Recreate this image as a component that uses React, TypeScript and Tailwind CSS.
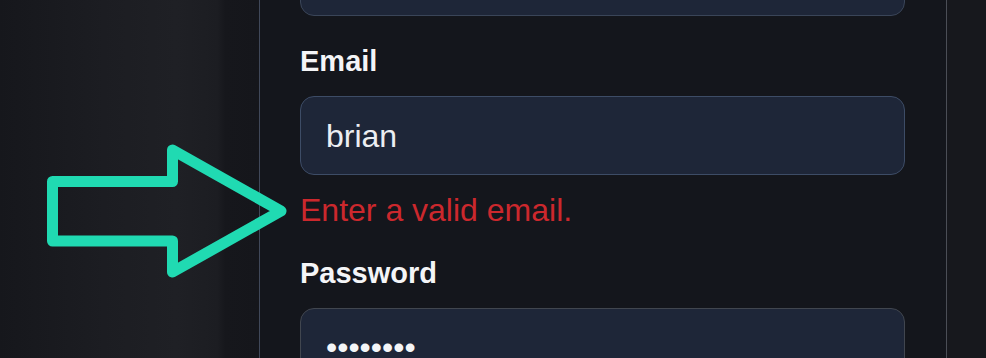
export default function App() {
  return (
    <div className="relative flex h-[358px] w-[986px] overflow-hidden bg-[#16171c] font-['Liberation_Sans',Arial,sans-serif]">
      {/* left backdrop */}
      <div className="h-full w-[259px] shrink-0 bg-[linear-gradient(90deg,#16171c_0%,#1c1d22_40%,#1f2025_68%,#1c1d22_84%,#16171c_87%,#15161b_100%)]" />

      {/* form panel */}
      <div className="flex h-full w-[688px] shrink-0 flex-col border-x border-l-[#404859] border-r-[#4b4e56] bg-[#14161c] pl-[40px] pr-[40px]">
        <div className="mt-[-63px] h-[79px] w-[605px] shrink-0 rounded-[14px] border border-[#3a4558] bg-[#1e2638]" />

        <label className="mt-[29px] block text-[29px] font-bold leading-[32px] text-[#f4f5f7]">Email</label>
        <div className="mt-[19px] flex h-[79px] w-[605px] shrink-0 items-center rounded-[14px] border border-[#3d4c66] bg-[#1e2638] px-[25px] text-[32px] leading-[36px] text-[#eceef2]">
          brian
        </div>
        <p className="mt-[17px] text-[32px] leading-[36px] text-[#cc282d]">Enter a valid email.</p>

        <label className="mt-[29px] block text-[29px] font-bold leading-[32px] text-[#f4f5f7]">Password</label>
        <div className="mt-[19px] flex h-[79px] w-[605px] shrink-0 items-start rounded-[14px] border border-[#41464f] bg-[#1e2638] px-[25px] pt-[20px] text-[32px] leading-[36px] text-[#f4f5f7]">
          ••••••••
        </div>
      </div>

      <div className="h-full flex-1 bg-[#17181d]" />

      {/* annotation arrow */}
      <svg className="absolute left-0 top-0" width="300" height="300" viewBox="0 0 300 300">
        <polygon
          points="52.5,181.5 172.5,181.5 172.5,150 281,211 172.5,272 172.5,241 52.5,241"
          fill="none"
          stroke="#20dab2"
          strokeWidth="11"
          strokeLinejoin="round"
        />
      </svg>
    </div>
  );
}
